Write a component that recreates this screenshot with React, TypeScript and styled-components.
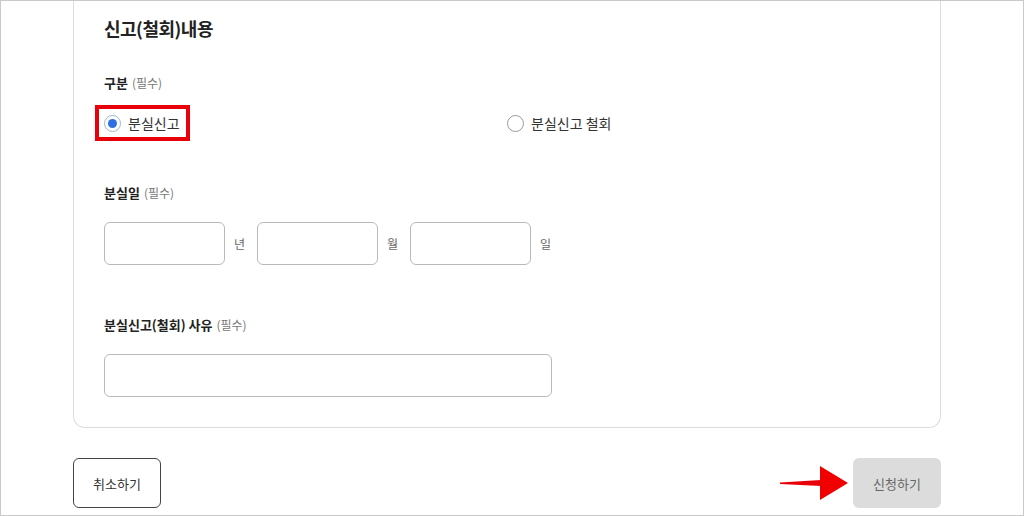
import { createGlobalStyle } from 'styled-components';
import styled from 'styled-components';

const GlobalStyle = createGlobalStyle`
    html, body {
        margin: 0;
        padding: 0;
        background: #fff;
    }
    body {
        font-family: "Noto Sans CJK KR", "Noto Sans", sans-serif;
        color: #222;
    }
    * {
        box-sizing: border-box;
    }
`

const Page = styled.div`
    width: 1024px;
    height: 516px;
    border: 1px solid #c9c9c9;
    overflow: hidden;
`

const Container = styled.main`
    width: 868px;
    margin-left: 72px;
`

const Card = styled.section`
    border: 1px solid #dcdcdc;
    border-top: none;
    border-radius: 0 0 12px 12px;
    padding: 14px 30px 30px;
`

const Title = styled.h2`
    margin: 0;
    font-size: 18px;
    line-height: 26px;
    font-weight: 700;
    letter-spacing: -0.5px;
    color: #222;
`

const Field = styled.div<{ $top: number }>`
    margin-top: ${p => p.$top}px;
`

const Label = styled.div`
    font-size: 13px;
    line-height: 20px;
    font-weight: 700;
    color: #222;
`

const Required = styled.span`
    margin-left: 4px;
    font-size: 12px;
    font-weight: 400;
    color: #777;
`

const RadioRow = styled.div`
    display: grid;
    grid-template-columns: 403px 1fr;
    align-items: center;
    height: 36px;
    margin-top: 12px;
`

const Highlight = styled.div`
    display: inline-flex;
    align-items: center;
    height: 36px;
    margin-left: -9px;
    padding: 0 6px 0 5px;
    border: 4px solid #e8000b;
    justify-self: start;
`

const RadioOption = styled.label`
    display: inline-flex;
    align-items: center;
    gap: 7px;
    font-size: 14px;
    color: #333;
    cursor: pointer;
`

const RadioCircle = styled.span<{ $checked?: boolean }>`
    display: inline-flex;
    align-items: center;
    justify-content: center;
    width: 17px;
    height: 17px;
    border-radius: 50%;
    border: 1px solid ${p => (p.$checked ? '#9fb4d6' : '#999')};
    background: #fff;

    &::after {
        content: '';
        display: ${p => (p.$checked ? 'block' : 'none')};
        width: 9px;
        height: 9px;
        border-radius: 50%;
        background: #2f6fe4;
    }
`

const DateRow = styled.div`
    display: flex;
    align-items: center;
    margin-top: 19px;
`

const DateGroup = styled.div`
    display: flex;
    align-items: center;
`

const Input = styled.input<{ $width: number }>`
    width: ${p => p.$width}px;
    height: 43px;
    border: 1px solid #b9b9b9;
    border-radius: 6px;
    padding: 0 12px;
    font-size: 14px;
    font-family: inherit;
    outline: none;
`

const Unit = styled.span`
    width: 32px;
    padding-left: 9px;
    font-size: 12px;
    color: #666;
`

const ReasonInput = styled(Input)`
    margin-top: 19px;
    display: block;
`

const Actions = styled.div`
    display: flex;
    justify-content: space-between;
    align-items: center;
    margin-top: 30px;
`

const CancelButton = styled.button`
    width: 88px;
    height: 50px;
    border: 1px solid #444;
    border-radius: 6px;
    background: #fff;
    font-family: inherit;
    font-size: 13px;
    color: #333;
`

const SubmitGroup = styled.div`
    display: flex;
    align-items: center;
    gap: 3px;
`

const SubmitButton = styled.button`
    width: 88px;
    height: 50px;
    border: none;
    border-radius: 6px;
    background: #dcdcdc;
    font-family: inherit;
    font-size: 13px;
    color: #666;
`

function Arrow() {
    return (
        <svg width="72" height="40" viewBox="0 0 72 40">
            <polygon points="2,19.5 43,17 43,23 2,21" fill="#e8000b" />
            <polygon points="42,3 70,20 42,37" fill="#f00000" />
        </svg>
    );
}

function App() {
    return (
        <Page>
            <GlobalStyle />
            <Container>
                <Card>
                    <Title>신고(철회)내용</Title>

                    <Field $top={32}>
                        <Label>구분<Required>(필수)</Required></Label>
                        <RadioRow>
                            <Highlight>
                                <RadioOption>
                                    <RadioCircle $checked />
                                    분실신고
                                </RadioOption>
                            </Highlight>
                            <RadioOption>
                                <RadioCircle />
                                분실신고 철회
                            </RadioOption>
                        </RadioRow>
                    </Field>

                    <Field $top={42}>
                        <Label>분실일<Required>(필수)</Required></Label>
                        <DateRow>
                            <DateGroup>
                                <Input $width={121} />
                                <Unit>년</Unit>
                            </DateGroup>
                            <DateGroup>
                                <Input $width={121} />
                                <Unit>월</Unit>
                            </DateGroup>
                            <DateGroup>
                                <Input $width={121} />
                                <Unit>일</Unit>
                            </DateGroup>
                        </DateRow>
                    </Field>

                    <Field $top={50}>
                        <Label>분실신고(철회) 사유<Required>(필수)</Required></Label>
                        <ReasonInput $width={448} />
                    </Field>
                </Card>

                <Actions>
                    <CancelButton type="button">취소하기</CancelButton>
                    <SubmitGroup>
                        <Arrow />
                        <SubmitButton type="submit">신청하기</SubmitButton>
                    </SubmitGroup>
                </Actions>
            </Container>
        </Page>
    );
}

export default App;
